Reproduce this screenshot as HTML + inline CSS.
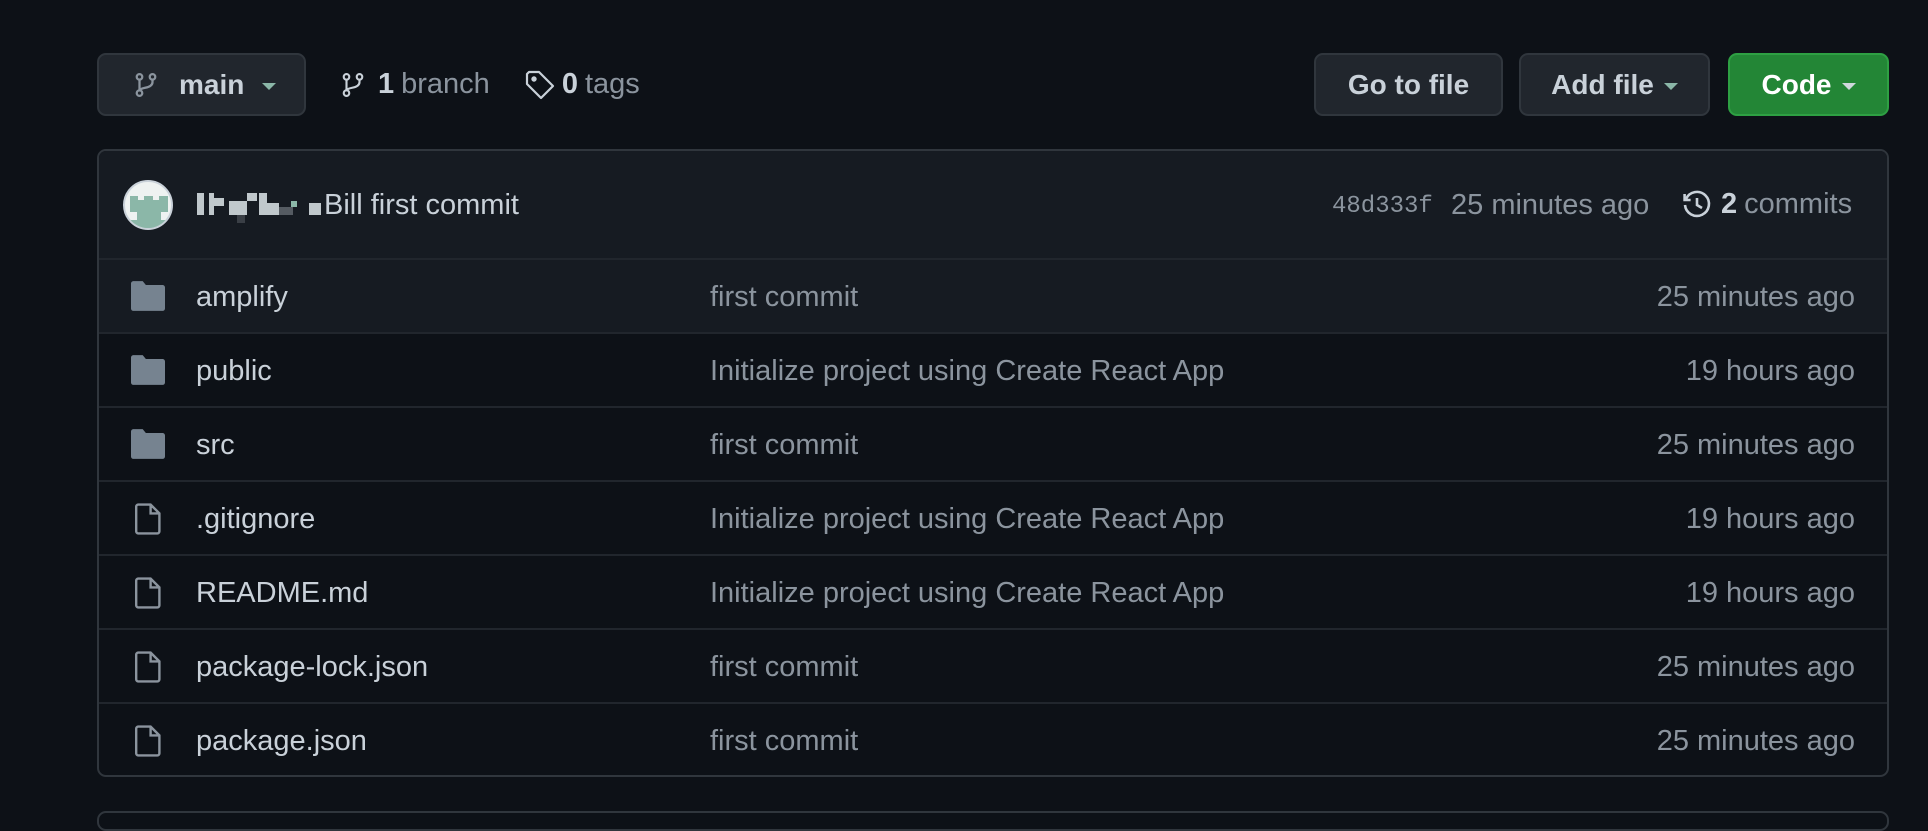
<!DOCTYPE html>
<html><head><meta charset="utf-8"><style>
*{margin:0;padding:0;box-sizing:border-box}
body{width:1928px;height:816px;background:#0d1117;font-family:"Liberation Sans",sans-serif;color:#c9d1d9;position:relative;overflow:hidden;font-size:29px}
.a{position:absolute}
.btn{position:absolute;top:53px;height:63px;border:2px solid #30363d;border-radius:9px;background:#21262d;color:#c9d1d9;font-weight:bold;display:flex;align-items:center;justify-content:center;font-size:28px}
.car{display:inline-block;width:0;height:0;border-left:7px solid transparent;border-right:7px solid transparent;border-top:7px solid #8b949e;margin-left:10px;margin-top:4px}
.box{position:absolute;left:97px;top:149px;width:1792px;height:628px;border:2px solid #30363d;border-radius:9px;overflow:hidden}
.hd{position:absolute;left:0;top:0;width:100%;height:109px;background:#161b22;border-bottom:2px solid #21262d}
.row{position:absolute;left:0;width:100%;height:74px;border-top:2px solid #21262d}
.row .n{position:absolute;left:97px;top:21px}
.row .m{position:absolute;left:611px;top:21px;color:#8b949e}
.row .t{position:absolute;right:32px;top:21px;color:#8b949e}
.row svg{position:absolute;left:32px;top:21px}
.mut{color:#8b949e}
</style></head><body>
<div class="btn" style="left:97px;width:209px;justify-content:flex-start;padding-left:34px">
<svg width="26" height="30" viewBox="0 0 16 16" fill="none" stroke="#8b949e" stroke-width="1.4"><circle cx="4" cy="3" r="1.7"/><circle cx="12" cy="3" r="1.7"/><circle cx="4" cy="13" r="1.7"/><path d="M4 4.7v6.6M12 4.7v1.5c0 2-2 3-4.5 3.5-2 .4-3.5 1-3.5 1.6"/></svg>
<span style="margin-left:20px">main</span><span class="car" style="margin-left:18px;border-top-color:#8bb7a8"></span></div>
<div class="a" style="left:340px;top:68px;display:flex;align-items:center">
<svg width="26" height="32" viewBox="0 0 16 16" fill="none" stroke="#c9d1d9" stroke-width="1.3"><circle cx="4" cy="3" r="1.7"/><circle cx="12" cy="3" r="1.7"/><circle cx="4" cy="13" r="1.7"/><path d="M4 4.7v6.6M12 4.7v1.5c0 2-2 3-4.5 3.5-2 .4-3.5 1-3.5 1.6"/></svg>
<b style="margin-left:12px">1</b><span class="mut" style="margin-left:7px">branch</span>
<svg style="margin-left:34px" width="32" height="32" viewBox="0 0 16 16" fill="none" stroke="#c9d1d9" stroke-width="1.1"><path d="M1.5 2.5v5l7 7 6-6-7-7h-5z" stroke-linejoin="round"/><circle cx="5" cy="5" r=".8" fill="#c9d1d9"/></svg>
<b style="margin-left:6px">0</b><span class="mut" style="margin-left:7px">tags</span></div>
<div class="btn" style="left:1314px;width:189px">Go to file</div>
<div class="btn" style="left:1519px;width:191px">Add file<span class="car" style="border-top-color:#8bb7a8"></span></div>
<div class="btn" style="left:1728px;width:161px;background:#238636;border-color:#2ea043;color:#fff">Code<span class="car" style="border-top-color:#cfd8dc"></span></div>
<div class="box">
<div class="hd">
<div class="a" style="left:24px;top:29px;width:50px;height:50px;border-radius:50%;background:#eef2f1;overflow:hidden;border:2px solid #c9d1d9">
<div class="a" style="left:5px;top:14px;width:38px;height:32px;background:#8bb7a8"></div>
<div class="a" style="left:13px;top:8px;width:6px;height:10px;background:#eef2f1"></div>
<div class="a" style="left:28px;top:8px;width:6px;height:10px;background:#eef2f1"></div>
<div class="a" style="left:5px;top:30px;width:7px;height:8px;background:#eef2f1"></div>
<div class="a" style="left:36px;top:30px;width:7px;height:8px;background:#eef2f1"></div>
<div class="a" style="left:0;top:38px;width:50px;height:12px;background:#8bb7a8"></div></div>
<div class="a" style="left:98px;top:42px;width:7px;height:22px;background:#c0c8cc"></div>
<div class="a" style="left:110px;top:42px;width:5px;height:22px;background:#c0c8cc"></div>
<div class="a" style="left:115px;top:47px;width:10px;height:8px;background:#c0c8cc"></div>
<div class="a" style="left:130px;top:50px;width:18px;height:14px;background:#c0c8cc"></div>
<div class="a" style="left:138px;top:64px;width:8px;height:8px;background:#3a3f46"></div>
<div class="a" style="left:148px;top:42px;width:10px;height:8px;background:#c0c8cc"></div>
<div class="a" style="left:160px;top:42px;width:8px;height:22px;background:#c0c8cc"></div>
<div class="a" style="left:168px;top:52px;width:12px;height:12px;background:#c0c8cc"></div>
<div class="a" style="left:180px;top:56px;width:14px;height:8px;background:#555b62"></div>
<div class="a" style="left:192px;top:50px;width:6px;height:6px;background:#8bb7a8"></div>
<div class="a" style="left:210px;top:52px;width:12px;height:12px;background:#c0c8cc"></div>
<div class="a" style="left:225px;top:38px">Bill <span>first commit</span></div>
<div class="a" style="left:1233px;top:42px;font-family:'Liberation Mono',monospace;font-size:24px;color:#8b949e">48d333f</div>
<div class="a mut" style="left:1352px;top:38px">25 minutes ago</div>
<div class="a" style="left:1582px;top:37px;display:flex;align-items:center">
<svg width="32" height="32" viewBox="0 0 16 16" fill="none" stroke="#c9d1d9" stroke-width="1.3"><path d="M2.5 5A6 6 0 1 1 2 8"/><path d="M1.8 2.5v3h3"/><path d="M8 4.5V8l2.5 1.5"/></svg>
<b style="margin-left:8px">2</b><span class="mut" style="margin-left:7px">commits</span></div>
</div>
<div class="row" style="top:107px;background:#161b22"><svg width="34" height="30" viewBox="0 0 16 14"><path d="M0 1.2C0 .5.5 0 1.2 0h4.3l1.5 1.8h7.8c.7 0 1.2.5 1.2 1.2v9.8c0 .7-.5 1.2-1.2 1.2H1.2C.5 14 0 13.5 0 12.8z" fill="#768390"/></svg><span class="n">amplify</span><span class="m">first commit</span><span class="t">25 minutes ago</span></div>
<div class="row" style="top:181px"><svg width="34" height="30" viewBox="0 0 16 14"><path d="M0 1.2C0 .5.5 0 1.2 0h4.3l1.5 1.8h7.8c.7 0 1.2.5 1.2 1.2v9.8c0 .7-.5 1.2-1.2 1.2H1.2C.5 14 0 13.5 0 12.8z" fill="#768390"/></svg><span class="n">public</span><span class="m">Initialize project using Create React App</span><span class="t">19 hours ago</span></div>
<div class="row" style="top:255px"><svg width="34" height="30" viewBox="0 0 16 14"><path d="M0 1.2C0 .5.5 0 1.2 0h4.3l1.5 1.8h7.8c.7 0 1.2.5 1.2 1.2v9.8c0 .7-.5 1.2-1.2 1.2H1.2C.5 14 0 13.5 0 12.8z" fill="#768390"/></svg><span class="n">src</span><span class="m">first commit</span><span class="t">25 minutes ago</span></div>
<div class="row" style="top:329px"><svg style="left:36px" width="26" height="32" viewBox="0 0 13 16" fill="none" stroke="#8b949e" stroke-width="1.2"><path d="M1.6.8h6.2l4.4 4.4v9a1 1 0 0 1-1 1H1.6a1 1 0 0 1-1-1V1.8a1 1 0 0 1 1-1zM7.8.8v4.4h4.4"/></svg><span class="n">.gitignore</span><span class="m">Initialize project using Create React App</span><span class="t">19 hours ago</span></div>
<div class="row" style="top:403px"><svg style="left:36px" width="26" height="32" viewBox="0 0 13 16" fill="none" stroke="#8b949e" stroke-width="1.2"><path d="M1.6.8h6.2l4.4 4.4v9a1 1 0 0 1-1 1H1.6a1 1 0 0 1-1-1V1.8a1 1 0 0 1 1-1zM7.8.8v4.4h4.4"/></svg><span class="n">README.md</span><span class="m">Initialize project using Create React App</span><span class="t">19 hours ago</span></div>
<div class="row" style="top:477px"><svg style="left:36px" width="26" height="32" viewBox="0 0 13 16" fill="none" stroke="#8b949e" stroke-width="1.2"><path d="M1.6.8h6.2l4.4 4.4v9a1 1 0 0 1-1 1H1.6a1 1 0 0 1-1-1V1.8a1 1 0 0 1 1-1zM7.8.8v4.4h4.4"/></svg><span class="n">package-lock.json</span><span class="m">first commit</span><span class="t">25 minutes ago</span></div>
<div class="row" style="top:551px"><svg style="left:36px" width="26" height="32" viewBox="0 0 13 16" fill="none" stroke="#8b949e" stroke-width="1.2"><path d="M1.6.8h6.2l4.4 4.4v9a1 1 0 0 1-1 1H1.6a1 1 0 0 1-1-1V1.8a1 1 0 0 1 1-1zM7.8.8v4.4h4.4"/></svg><span class="n">package.json</span><span class="m">first commit</span><span class="t">25 minutes ago</span></div>
</div>
<div class="a" style="left:97px;top:811px;width:1792px;height:20px;border:2px solid #30363d;border-radius:9px"></div>
</body></html>
